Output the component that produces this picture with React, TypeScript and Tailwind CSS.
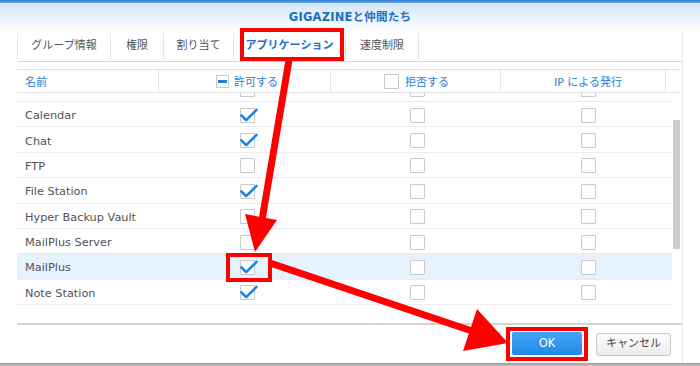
import React from "react";

const FONT = "font-['DejaVu_Sans','Noto_Sans_CJK_JP',sans-serif]";

function Check({ checked }: { checked: boolean }) {
  return (
    <div className="relative w-[15px] h-[15px] border border-[#c9c9c9] bg-white rounded-[1px]">
      {checked && (
        <svg className="absolute left-0 top-0 overflow-visible" width="15" height="15" viewBox="0 0 15 15">
          <path d="M0.5 6.5 L5.2 11.2 L15.5 0.8" stroke="#1a87e4" strokeWidth="2.6" fill="none" strokeLinecap="round" strokeLinejoin="round" />
        </svg>
      )}
    </div>
  );
}

const rows = [
  { name: "", allow: false, partial: true },
  { name: "Calendar", allow: true },
  { name: "Chat", allow: true },
  { name: "FTP", allow: false },
  { name: "File Station", allow: true },
  { name: "Hyper Backup Vault", allow: false },
  { name: "MailPlus Server", allow: false },
  { name: "MailPlus", allow: true, hl: true },
  { name: "Note Station", allow: true },
];

const tabs = [
  { label: "グループ情報", w: "w-[93px]" },
  { label: "権限", w: "w-[53px]" },
  { label: "割り当て", w: "w-[70px]" },
  { label: "アプリケーション", w: "w-[112px]", active: true },
  { label: "速度制限", w: "w-[74px]" },
];

export default function App() {
  return (
    <div className={`relative w-[700px] h-[366px] overflow-hidden bg-white ${FONT}`}>
      {/* title bar */}
      <div className="h-[3px] bg-gradient-to-b from-[#2b7fd6] to-[#6aa8e6]" />
      <div className="h-[29px] bg-gradient-to-b from-[#d3e6f8] to-[#ffffff] flex items-center justify-center pt-[1px]">
        <span className="text-[11.5px] font-bold text-[#1f6fbe] tracking-[0.2px]">GIGAZINEと仲間たち</span>
      </div>

      <div className="flex">
        <div className="w-[683px] border-r border-[#e8e8e8] flex flex-col">
          {/* tabs */}
          <div className="ml-[17px] h-[30px] border-b border-[#d9d9d9] flex items-start pt-[1px]">
            {tabs.map((t, i) => (
              <div
                key={t.label}
                className={`${t.w} h-[26px] flex items-center justify-center border-l border-[#e4e4e4] ${
                  i === tabs.length - 1 ? "border-r" : ""
                } text-[11px] ${t.active ? "text-[#1a6fcf] font-bold" : "text-[#555555]"}`}
              >
                {t.label}
              </div>
            ))}
          </div>

          {/* header */}
          <div className="ml-[17px] mt-[7px] w-[663px] h-[24px] border-y border-[#e2e2e2] flex text-[11px] text-[#2a80d4]">
            <div className="w-[141px] flex items-center pl-[8px] pt-[4px]">名前</div>
            <div className="w-[172px] flex items-center pl-[57px] gap-[5px] border-l border-[#e6e6e6] pt-[1px]">
              <div className="w-[13px] h-[13px] border border-[#c9c9c9] bg-white flex items-center justify-center">
                <div className="w-[9px] h-[3px] bg-[#1c7fdc]" />
              </div>
              <span className="pt-[3px]">許可する</span>
            </div>
            <div className="w-[170px] flex items-center pl-[53px] gap-[6px] border-l border-[#e6e6e6] pt-[1px]">
              <div className="w-[15px] h-[15px] border border-[#c9c9c9] bg-white" />
              <span className="pt-[3px]">拒否する</span>
            </div>
            <div className="w-[165px] flex items-center pl-[53px] border-l border-[#e6e6e6] pt-[4px]">IP による発行</div>
            <div className="flex-1 border-l border-[#e6e6e6]" />
          </div>

          {/* body */}
          <div className="h-[230px] flex">
            <div className="ml-[17px] w-[655px] h-full overflow-hidden flex flex-col">
              {rows.map((r, i) => (
                <div
                  key={i}
                  className={`h-[25.375px] shrink-0 flex items-center border-b border-[#ececec] pt-[2px] ${
                    r.partial ? "mt-[-16.375px]" : ""
                  } ${r.hl ? "bg-[#e6f2fd]" : ""}`}
                >
                  <div className="w-[141px] pl-[8px] pt-[3px] text-[11.3px] text-[#525252] whitespace-nowrap">{r.name}</div>
                  <div className="w-[172px] pl-[82px]">
                    <Check checked={r.allow} />
                  </div>
                  <div className="w-[170px] pl-[80px]">
                    <Check checked={false} />
                  </div>
                  <div className="w-[165px] pl-[81px]">
                    <Check checked={false} />
                  </div>
                </div>
              ))}
            </div>
            <div className="ml-[1px] w-[7px] pt-[27px]">
              <div className="h-[129px] bg-[#cdcdcd]" />
            </div>
          </div>

          {/* footer */}
          <div className="ml-[17px] h-[40px] border-t-2 border-[#d4d4d4] flex items-center justify-end pr-[11px] gap-[8px]">
            <div className="border-[4px] border-[#ff0000] pl-[2px] pr-[2px] pt-[1px] pb-[2px]">
              <div className="w-[70px] h-[23px] rounded-[2px] bg-gradient-to-b from-[#42a5f7] to-[#1f88e6] flex items-center justify-center text-white text-[11.5px]">
                OK
              </div>
            </div>
            <div className="w-[75px] h-[23px] rounded-[3px] border border-[#c6c6c6] bg-gradient-to-b from-[#fdfdfd] to-[#ececec] flex items-center justify-center text-[11px] text-[#444444]">
              キャンセル
            </div>
          </div>
        </div>
        <div className="flex-1" />
      </div>

      <div className="h-[3px] bg-gradient-to-b from-[#9a9a9a] to-[#c4c4c4]" />

      {/* annotations */}
      <div className="absolute left-[240px] top-[28px] w-[104px] h-[33px] border-[4px] border-[#ff0000]" />
      <div className="absolute left-[226px] top-[253px] w-[46px] h-[29px] border-[4px] border-[#ff0000]" />
      <svg className="absolute left-0 top-0 pointer-events-none" width="700" height="366" viewBox="0 0 700 366">
        <line x1="289" y1="60" x2="262" y2="220" stroke="#ff0000" strokeWidth="7" />
        <polygon points="277,220 245,214 255,252" fill="#ff0000" />
        <line x1="270" y1="263" x2="472" y2="331" stroke="#ff0000" strokeWidth="7" />
        <polygon points="477,309 463,351 508,343" fill="#ff0000" />
      </svg>
    </div>
  );
}
